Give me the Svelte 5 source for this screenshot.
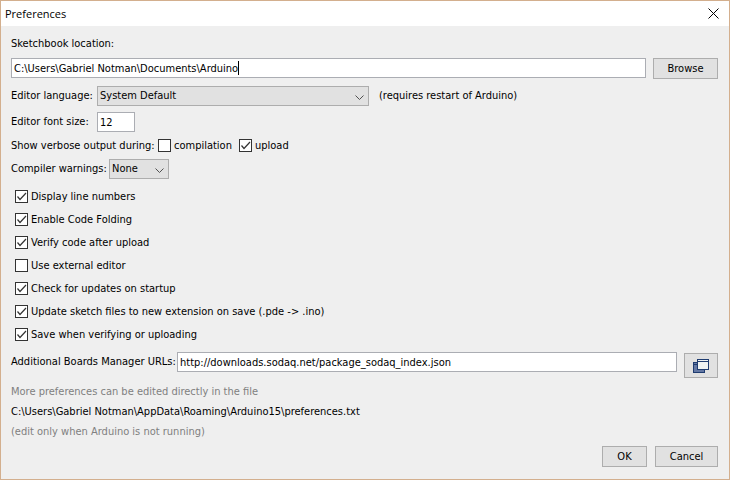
<script lang="ts">
	import { onMount } from 'svelte';

	let sketchbook = $state('C:\\Users\\Gabriel Notman\\Documents\\Arduino');
	let language = $state('System Default');
	let fontSize = $state('12');
	let warnings = $state('None');
	let boardUrls = $state('http://downloads.sodaq.net/package_sodaq_index.json');
	const prefsFile = 'C:\\Users\\Gabriel Notman\\AppData\\Roaming\\Arduino15\\preferences.txt';

	let verbose = $state([
		{ label: 'compilation', on: false },
		{ label: 'upload', on: true }
	]);

	let options = $state([
		{ label: 'Display line numbers', on: true },
		{ label: 'Enable Code Folding', on: true },
		{ label: 'Verify code after upload', on: true },
		{ label: 'Use external editor', on: false },
		{ label: 'Check for updates on startup', on: true },
		{ label: 'Update sketch files to new extension on save (.pde -> .ino)', on: true },
		{ label: 'Save when verifying or uploading', on: true }
	]);

	let pathInput: HTMLInputElement;
	let caretX = $state(0);

	// the caret is our own, so it has to follow the selection
	function moveCaret() {
		const ctx = document.createElement('canvas').getContext('2d');
		if (!ctx) return;
		ctx.font = getComputedStyle(pathInput).font;
		const end = pathInput.selectionEnd ?? 0;
		caretX = Math.round(ctx.measureText(pathInput.value.slice(0, end)).width) + 3;
	}

	onMount(() => {
		pathInput.focus();
		pathInput.setSelectionRange(sketchbook.length, sketchbook.length);
		moveCaret();
	});
</script>

{#snippet check(item)}
	<label class="check">
		<span class="box">
			<input type="checkbox" bind:checked={item.on} />
			{#if item.on}
				<svg width="13" height="13" viewBox="0 0 13 13"><path d="M2.5 6.5 5 9.5 11 3" /></svg>
			{/if}
		</span>
		{item.label}
	</label>
{/snippet}

{#snippet chevron()}
	<svg class="chevron" width="9" height="6" viewBox="0 0 9 6"><path d="M.5 .5 4.5 4.5 8.5 .5" /></svg>
{/snippet}

<div class="dialog">
	<header>
		<h1>Preferences</h1>
		<button class="close" aria-label="Close">
			<svg width="11" height="11" viewBox="0 0 11 11"><path d="M.5 .5 10.5 10.5M10.5 .5 .5 10.5" /></svg>
		</button>
	</header>

	<main>
		<label class="title" for="sketchbook">Sketchbook location:</label>
		<div class="row path">
			<span class="field grow">
				<input
					id="sketchbook"
					type="text"
					spellcheck="false"
					bind:value={sketchbook}
					bind:this={pathInput}
					oninput={moveCaret}
					onkeyup={moveCaret}
					onclick={moveCaret}
				/>
				<span class="caret" style="left: {caretX}px"></span>
			</span>
			<button class="browse">Browse</button>
		</div>

		<div class="row">
			<label class="name" for="language">Editor language:</label>
			<span class="select language">
				<select id="language" bind:value={language}>
					<option>System Default</option>
				</select>
				{@render chevron()}
			</span>
			<span class="note">(requires restart of Arduino)</span>
		</div>

		<div class="row">
			<label class="name" for="font-size">Editor font size:</label>
			<input id="font-size" class="size" type="text" bind:value={fontSize} />
		</div>

		<div class="row verbose">
			<span class="lead">Show verbose output during:</span>
			{#each verbose as item}
				{@render check(item)}
			{/each}
		</div>

		<div class="row">
			<label class="name wide" for="warnings">Compiler warnings:</label>
			<span class="select warnings">
				<select id="warnings" bind:value={warnings}>
					<option>None</option>
				</select>
				{@render chevron()}
			</span>
		</div>

		<div class="options">
			{#each options as item}
				{@render check(item)}
			{/each}
		</div>

		<div class="row urls">
			<label for="urls">Additional Boards Manager URLs:</label>
			<input id="urls" class="grow" type="text" spellcheck="false" bind:value={boardUrls} />
			<button class="expand" aria-label="Edit URLs">
				<svg width="16" height="14" viewBox="0 0 16 14">
					<rect x=".5" y="3.5" width="11" height="10" fill="#6478a4" stroke="#1f3c70" />
					<path d="M1 5.5H11" stroke="#1f3c70" />
					<rect x="4.5" y=".5" width="11" height="10" fill="#eff3f3" stroke="#1f3c70" />
					<path d="M5 2.5H15" stroke="#1f3c70" />
				</svg>
			</button>
		</div>

		<div class="hints">
			<p class="dim">More preferences can be edited directly in the file</p>
			<p>{prefsFile}</p>
			<p class="dim">(edit only when Arduino is not running)</p>
		</div>

		<footer>
			<button class="ok">OK</button>
			<button class="cancel">Cancel</button>
		</footer>
	</main>
</div>

<style>
	:global(body) {
		margin: 0;
	}

	.dialog {
		box-sizing: border-box;
		min-height: 100vh;
		display: flex;
		flex-direction: column;
		border: 1px solid #d3af8e;
		background: #efefef;
		color: #000;
		font: 11px/16px 'DejaVu Sans Condensed', 'DejaVu Sans', sans-serif;
	}

	header {
		display: flex;
		align-items: center;
		justify-content: space-between;
		height: 25px;
		padding: 0 10px 0 4px;
		background: #fff;
	}

	h1 {
		margin: 0;
		font: 11px/16px 'Open Sans', sans-serif;
	}

	svg {
		display: block;
		fill: none;
	}

	.close {
		padding: 0;
		border: 0;
		background: none;
	}

	.close svg {
		stroke: #000;
	}

	main {
		flex: 1;
		display: flex;
		flex-direction: column;
		gap: 6px;
		padding: 10px 11px 12px 10px;
		white-space: nowrap;
	}

	.title {
		align-self: flex-start;
	}

	.row {
		display: flex;
		align-items: center;
	}

	.path {
		height: 22px;
		align-items: flex-start;
		gap: 7px;
	}

	input[type='text'],
	select,
	button {
		box-sizing: border-box;
		font: inherit;
		color: inherit;
		border-radius: 0;
		outline: none;
	}

	input[type='text'] {
		height: 20px;
		padding: 0 2px;
		border: 1px solid #abadb3;
		background: #fff;
	}

	.grow {
		flex: 1;
		min-width: 0;
	}

	.field {
		position: relative;
		display: flex;
	}

	.field input {
		width: 100%;
		caret-color: transparent;
	}

	.caret {
		display: none;
		position: absolute;
		top: 3px;
		width: 1px;
		height: 14px;
		background: #000;
	}

	input:focus + .caret {
		display: block;
	}

	.size {
		width: 38px;
	}

	.browse,
	.expand,
	footer button {
		height: 21px;
		padding: 0;
		border: 1px solid #adadad;
		background: #e1e1e1;
	}

	.browse {
		width: 65px;
	}

	.name {
		width: 86px;
	}

	.wide {
		width: 98px;
	}

	.select {
		position: relative;
		display: flex;
	}

	select {
		appearance: none;
		width: 100%;
		height: 20px;
		padding: 0 2px;
		border: 1px solid #adadad;
		background: #e1e1e1;
	}

	.language {
		width: 272px;
	}

	.warnings {
		width: 60px;
	}

	.chevron {
		position: absolute;
		top: 9px;
		right: 5px;
		stroke: #505050;
		pointer-events: none;
	}

	.note {
		margin-left: 10px;
	}

	.verbose {
		height: 15px;
		gap: 7px;
	}

	.lead {
		width: 140px;
	}

	.check {
		display: flex;
		align-items: center;
		gap: 3px;
	}

	.box {
		position: relative;
		width: 13px;
		height: 13px;
	}

	.box input {
		appearance: none;
		display: block;
		box-sizing: border-box;
		width: 13px;
		height: 13px;
		margin: 0;
		border: 1px solid #333;
		background: #fff;
	}

	.box svg {
		position: absolute;
		inset: 0;
		stroke: #333;
		stroke-width: 1.2;
		pointer-events: none;
	}

	.options {
		display: flex;
		flex-direction: column;
		align-items: flex-start;
		padding-left: 4px;
	}

	.options .check {
		height: 23px;
	}

	.urls {
		height: 26px;
		align-items: flex-start;
	}

	.urls label {
		width: 166px;
		line-height: 20px;
	}

	.expand {
		display: flex;
		align-items: center;
		justify-content: center;
		align-self: flex-end;
		width: 34px;
		height: 25px;
		margin-left: 7px;
	}

	.hints {
		display: flex;
		flex-direction: column;
		gap: 4px;
	}

	.hints p {
		margin: 0;
	}

	.hints .dim {
		color: #808080;
	}

	footer {
		display: flex;
		justify-content: flex-end;
		gap: 8px;
	}

	.ok {
		width: 45px;
	}

	.cancel {
		width: 63px;
	}
</style>
